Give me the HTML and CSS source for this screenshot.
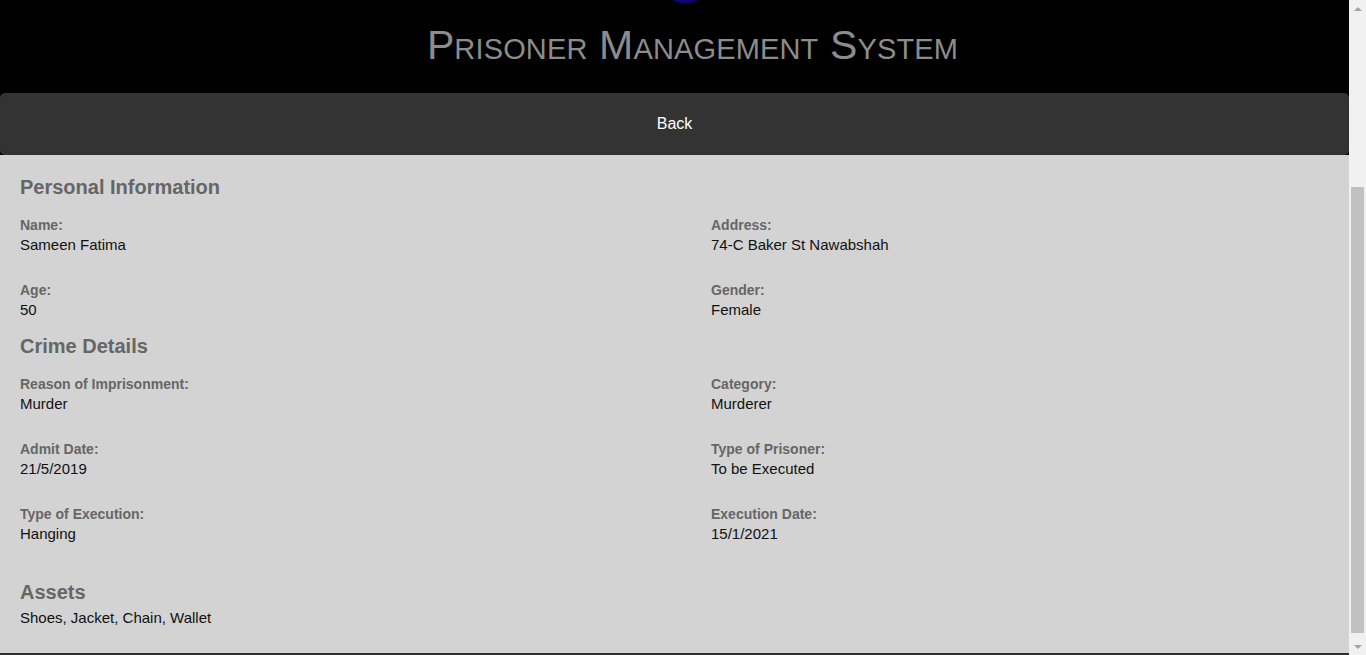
FILE: index.html
```html
<!DOCTYPE html>
<html lang="en">
<head>
<meta charset="utf-8">
<title>Prisoner Management System</title>
<link rel="stylesheet" href="styles.css">
</head>
<body>
<div class="app">
  <div class="page">
    <header class="header">
      <div class="logo"></div>
      <h1 class="title">Prisoner Management System</h1>
    </header>
    <nav class="backbar"><a class="back" href="#">Back</a></nav>
    <main class="content">
      <h3 class="section-title">Personal Information</h3>
      <div class="fields">
        <div class="field"><div class="label">Name:</div><div class="value">Sameen Fatima</div></div>
        <div class="field"><div class="label">Address:</div><div class="value">74-C Baker St Nawabshah</div></div>
        <div class="field last"><div class="label">Age:</div><div class="value">50</div></div>
        <div class="field last"><div class="label">Gender:</div><div class="value">Female</div></div>
      </div>
      <h3 class="section-title">Crime Details</h3>
      <div class="fields">
        <div class="field"><div class="label">Reason of Imprisonment:</div><div class="value">Murder</div></div>
        <div class="field"><div class="label">Category:</div><div class="value">Murderer</div></div>
        <div class="field"><div class="label">Admit Date:</div><div class="value">21/5/2019</div></div>
        <div class="field"><div class="label">Type of Prisoner:</div><div class="value">To be Executed</div></div>
        <div class="field end"><div class="label">Type of Execution:</div><div class="value">Hanging</div></div>
        <div class="field end"><div class="label">Execution Date:</div><div class="value">15/1/2021</div></div>
      </div>
      <h3 class="section-title assets-title">Assets</h3>
      <div class="value">Shoes, Jacket, Chain, Wallet</div>
    </main>
    <footer class="footer"></footer>
  </div>
  <div class="scrollbar">
    <div class="sb-btn"><span class="arrow-up"></span></div>
    <div class="sb-track"><div class="sb-thumb"></div></div>
    <div class="sb-btn"><span class="arrow-down"></span></div>
  </div>
</div>
</body>
</html>
```
FILE: styles.css
```css
* { box-sizing: border-box; }
html, body { margin: 0; padding: 0; }
body {
  font-family: "Liberation Sans", Arial, sans-serif;
  background: #000;
  overflow: hidden;
}
.app {
  display: flex;
  height: 655px;
}
.page {
  flex: 1;
  display: flex;
  flex-direction: column;
  overflow: hidden;
  background: #000;
}
.header {
  height: 93px;
  background: #000;
  display: flex;
  flex-direction: column;
  align-items: center;
}
.logo {
  width: 44px;
  height: 44px;
  margin-top: -40px;
  margin-left: 20px;
  border-radius: 50%;
  background: radial-gradient(circle at 50% 40%, #2a1cc8 0%, #1608a0 55%, #0a0450 80%, #000 100%);
}
.title {
  margin: 18px 0 0 36px;
  font-family: "Liberation Sans", Arial, sans-serif;
  font-size: 41px;
  font-weight: normal;
  font-variant: small-caps;
  color: #8c8c8c;
  line-height: 46px;
  letter-spacing: 0.15px;
}
.backbar {
  height: 62px;
  background: #333;
  border-radius: 5px;
  display: flex;
  align-items: center;
  justify-content: center;
}
.back {
  color: #fff;
  text-decoration: none;
  font-size: 16px;
}
.content {
  flex: 1;
  background: #d3d3d3;
  padding: 20px 20px 0 20px;
}
.section-title {
  margin: 0 0 16px 0;
  font-size: 20px;
  line-height: 24px;
  font-weight: bold;
  color: #666;
}
.fields {
  display: grid;
  grid-template-columns: 691px 1fr;
  margin-bottom: 14px;
}
.field { margin-bottom: 25px; }
.field.last { margin-bottom: 0; }
.field.end { margin-bottom: 22px; }
.label {
  font-size: 14px;
  line-height: 20px;
  font-weight: bold;
  color: #666;
}
.value {
  font-size: 15px;
  line-height: 20px;
  color: #111;
}
.assets-title { margin-bottom: 4px; }
.footer {
  height: 2px;
  background: #27312f;
}
.scrollbar {
  width: 17px;
  display: flex;
  flex-direction: column;
  background: #f1f1f1;
}
.sb-btn {
  height: 17px;
  display: flex;
  align-items: center;
  justify-content: center;
}
.arrow-up, .arrow-down {
  display: block;
  width: 0;
  height: 0;
  border-left: 4px solid transparent;
  border-right: 4px solid transparent;
}
.arrow-up { border-bottom: 4px solid #a3a3a3; }
.arrow-down { border-top: 4px solid #a3a3a3; }
.sb-track {
  flex: 1;
  padding: 170px 2px 0 2px;
}
.sb-thumb {
  height: 446px;
  background: #c1c1c1;
}
```
